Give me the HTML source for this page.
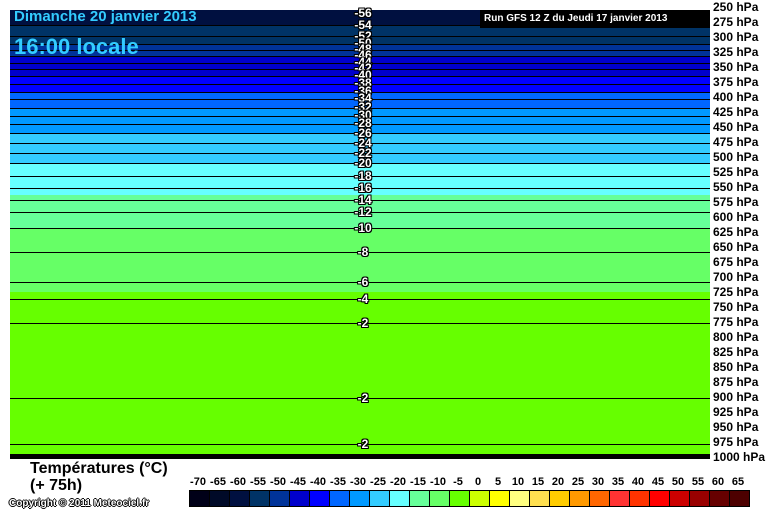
<!DOCTYPE html>
<html><head><meta charset="utf-8"><style>
body{margin:0;width:768px;height:512px;background:#fff;position:relative;overflow:hidden;font-family:"Liberation Sans",Arial,sans-serif}
.b{position:absolute;left:10px;width:700px}
.l{position:absolute;left:10px;width:700px;height:1px;background:#000}
.t{position:absolute;left:340px;width:46px;text-align:center;font-weight:bold;font-size:12px;color:#fff;line-height:11px;text-shadow:1px 0 #000,-1px 0 #000,0 1px #000,0 -1px #000,1px 1px #000,-1px -1px #000,1px -1px #000,-1px 1px #000}
.p{position:absolute;left:713px;font-weight:bold;font-size:12px;line-height:12px;color:#000}
.k{position:absolute;top:490px;width:19px;height:15px;border:1px solid #000;border-left:none}
.kl{position:absolute;top:477px;width:20px;text-align:center;font-weight:bold;font-size:11px;line-height:11px}
</style></head><body>
<div class="b" style="top:10px;height:15px;background:#001040"></div>
<div class="b" style="top:25px;height:19px;background:#003366"></div>
<div class="b" style="top:44px;height:13px;background:#003399"></div>
<div class="b" style="top:57px;height:19px;background:#0000cc"></div>
<div class="b" style="top:76px;height:16px;background:#0000ff"></div>
<div class="b" style="top:92px;height:16px;background:#0066ff"></div>
<div class="b" style="top:108px;height:25px;background:#0099ff"></div>
<div class="b" style="top:133px;height:30px;background:#33ccff"></div>
<div class="b" style="top:163px;height:32px;background:#66ffff"></div>
<div class="b" style="top:195px;height:33px;background:#66ff99"></div>
<div class="b" style="top:228px;height:64px;background:#66ff66"></div>
<div class="b" style="top:292px;height:162px;background:#66ff00"></div>
<div class="b" style="top:454px;height:5px;background:#000"></div>
<div class="l" style="top:25px"></div><div class="l" style="top:36px"></div><div class="l" style="top:44px"></div><div class="l" style="top:50px"></div><div class="l" style="top:56px"></div><div class="l" style="top:63px"></div><div class="l" style="top:69px"></div><div class="l" style="top:76px"></div><div class="l" style="top:84px"></div><div class="l" style="top:92px"></div><div class="l" style="top:99px"></div><div class="l" style="top:108px"></div><div class="l" style="top:116px"></div><div class="l" style="top:124px"></div><div class="l" style="top:133px"></div><div class="l" style="top:143px"></div><div class="l" style="top:153px"></div><div class="l" style="top:163px"></div><div class="l" style="top:176px"></div><div class="l" style="top:188px"></div><div class="l" style="top:200px"></div><div class="l" style="top:212px"></div><div class="l" style="top:228px"></div><div class="l" style="top:252px"></div><div class="l" style="top:282px"></div><div class="l" style="top:299px"></div><div class="l" style="top:323px"></div><div class="l" style="top:398px"></div><div class="l" style="top:444px"></div>
<div class="t" style="top:8px">-56</div><div class="t" style="top:20px">-54</div><div class="t" style="top:31px">-52</div><div class="t" style="top:38px">-50</div><div class="t" style="top:44px">-48</div><div class="t" style="top:50px">-46</div><div class="t" style="top:57px">-44</div><div class="t" style="top:63px">-42</div><div class="t" style="top:70px">-40</div><div class="t" style="top:78px">-38</div><div class="t" style="top:86px">-36</div><div class="t" style="top:93px">-34</div><div class="t" style="top:102px">-32</div><div class="t" style="top:110px">-30</div><div class="t" style="top:118px">-28</div><div class="t" style="top:128px">-26</div><div class="t" style="top:138px">-24</div><div class="t" style="top:148px">-22</div><div class="t" style="top:158px">-20</div><div class="t" style="top:171px">-18</div><div class="t" style="top:183px">-16</div><div class="t" style="top:195px">-14</div><div class="t" style="top:207px">-12</div><div class="t" style="top:223px">-10</div><div class="t" style="top:247px">-8</div><div class="t" style="top:277px">-6</div><div class="t" style="top:294px">-4</div><div class="t" style="top:318px">-2</div><div class="t" style="top:393px">-2</div><div class="t" style="top:439px">-2</div>
<div style="position:absolute;left:14px;top:8px;color:#33ccff;font-weight:bold;font-size:15px">Dimanche 20 janvier 2013</div>
<div style="position:absolute;left:14px;top:34px;color:#33ccff;font-weight:bold;font-size:22px">16:00 locale</div>
<div style="position:absolute;left:480px;top:10px;width:230px;height:18px;background:#000;color:#fff;font-weight:bold;font-size:10px;line-height:18px;text-indent:4px">Run GFS 12 Z du Jeudi 17 janvier 2013</div>
<div class="p" style="top:1px">250 hPa</div><div class="p" style="top:16px">275 hPa</div><div class="p" style="top:31px">300 hPa</div><div class="p" style="top:46px">325 hPa</div><div class="p" style="top:61px">350 hPa</div><div class="p" style="top:76px">375 hPa</div><div class="p" style="top:91px">400 hPa</div><div class="p" style="top:106px">425 hPa</div><div class="p" style="top:121px">450 hPa</div><div class="p" style="top:136px">475 hPa</div><div class="p" style="top:151px">500 hPa</div><div class="p" style="top:166px">525 hPa</div><div class="p" style="top:181px">550 hPa</div><div class="p" style="top:196px">575 hPa</div><div class="p" style="top:211px">600 hPa</div><div class="p" style="top:226px">625 hPa</div><div class="p" style="top:241px">650 hPa</div><div class="p" style="top:256px">675 hPa</div><div class="p" style="top:271px">700 hPa</div><div class="p" style="top:286px">725 hPa</div><div class="p" style="top:301px">750 hPa</div><div class="p" style="top:316px">775 hPa</div><div class="p" style="top:331px">800 hPa</div><div class="p" style="top:346px">825 hPa</div><div class="p" style="top:361px">850 hPa</div><div class="p" style="top:376px">875 hPa</div><div class="p" style="top:391px">900 hPa</div><div class="p" style="top:406px">925 hPa</div><div class="p" style="top:421px">950 hPa</div><div class="p" style="top:436px">975 hPa</div><div class="p" style="top:451px">1000 hPa</div>
<div style="position:absolute;left:30px;top:460px;font-weight:bold;font-size:16px;line-height:17px">Températures (°C)<br>(+ 75h)</div>
<div style="position:absolute;left:9px;top:498px;font-weight:bold;font-size:10px;color:#fff;text-shadow:1px 0 #000,-1px 0 #000,0 1px #000,0 -1px #000">Copyright © 2011 Meteociel.fr</div>
<div style="position:absolute;left:189px;top:490px;width:1px;height:17px;background:#000"></div>
<div id="lg"></div>
<script>
var c=["#000018","#000a28","#001040","#003366","#003399","#0000cc","#0000ff","#0066ff","#0099ff","#33ccff","#66ffff","#66ff99","#66ff66","#66ff00","#ccff00","#ffff00","#ffff80","#ffe050","#ffcc00","#ff9900","#ff6600","#ff3333","#ff3300","#ff0000","#cc0000","#990000","#660000","#4d0000"];
var h="";for(var i=0;i<28;i++){var x=190+i*20;h+='<div class="k" style="left:'+x+'px;background:'+c[i]+'"></div><div class="kl" style="left:'+(x-2)+'px">'+(-70+5*i)+'</div>';}
document.getElementById("lg").innerHTML=h;
</script>
</body></html>
